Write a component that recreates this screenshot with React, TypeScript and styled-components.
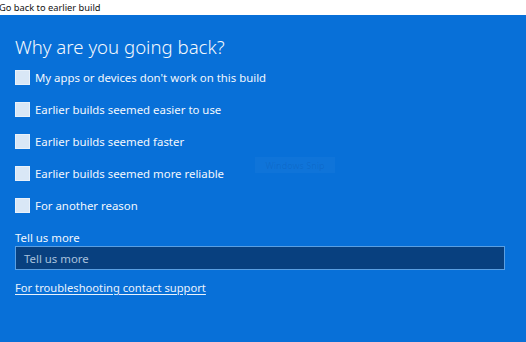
import React from "react";
import styled, { createGlobalStyle } from "styled-components";

const Global = createGlobalStyle`
  html, body { margin: 0; padding: 0; overflow: hidden; }
  body { font-family: "Noto Sans", "Open Sans", sans-serif; }
`;

const Window = styled.div`
  width: 526px;
  height: 342px;
  display: flex;
  flex-direction: column;
  overflow: hidden;
`;

const TitleBar = styled.div`
  height: 15px;
  background: #ffffff;
  display: flex;
  align-items: center;
  flex-shrink: 0;
`;

const TitleText = styled.span`
  margin-left: -1px;
  font-size: 9.3px;
  line-height: 12px;
  color: #111;
`;

const Panel = styled.div`
  position: relative;
  flex: 1;
  background: #0870d8;
  padding: 19px 21px 0 15px;
  display: flex;
  flex-direction: column;
  color: #ffffff;
`;

const Heading = styled.h1`
  margin: 0;
  font-size: 18.6px;
  line-height: 26px;
  font-weight: 300;
  color: #f4f8fd;
`;

const List = styled.div`
  margin-top: 1px;
  display: flex;
  flex-direction: column;
`;

const Row = styled.label`
  height: 32px;
  display: flex;
  align-items: center;
  gap: 5px;
`;

const Box = styled.span`
  width: 13px;
  height: 13px;
  background: #d9e7f6;
  border: 1px solid #e9f1fa;
  flex-shrink: 0;
`;

const RowText = styled.span`
  font-size: 11.4px;
  color: #f2f7fd;
`;

const FieldLabel = styled.div`
  margin-top: 9px;
  font-size: 11.4px;
  line-height: 16px;
  color: #f2f7fd;
`;

const Input = styled.div`
  height: 22px;
  background: #08407f;
  border: 1px solid #5a9fe2;
  display: flex;
  align-items: center;
  padding-left: 8px;
  font-size: 11.4px;
  color: #a9c2dd;
`;

const Link = styled.a`
  margin-top: 10px;
  font-size: 11.2px;
  line-height: 16px;
  color: #eaf2fc;
  text-decoration: underline;
  text-underline-offset: 2px;
  align-self: flex-start;
`;

const Ghost = styled.div`
  position: absolute;
  left: 255px;
  top: 142px;
  width: 80px;
  height: 16px;
  background: rgba(255, 255, 255, 0.03);
  display: flex;
  align-items: center;
  justify-content: center;
  font-size: 9px;
  color: rgba(0, 40, 100, 0.12);
`;

const reasons = [
  "My apps or devices don't work on this build",
  "Earlier builds seemed easier to use",
  "Earlier builds seemed faster",
  "Earlier builds seemed more reliable",
  "For another reason",
];

export default function App() {
  return (
    <>
      <Global />
      <Window>
        <TitleBar>
          <TitleText>Go back to earlier build</TitleText>
        </TitleBar>
        <Panel>
          <Heading>Why are you going back?</Heading>
          <List>
            {reasons.map((r) => (
              <Row key={r}>
                <Box />
                <RowText>{r}</RowText>
              </Row>
            ))}
          </List>
          <FieldLabel>Tell us more</FieldLabel>
          <Input>Tell us more</Input>
          <Link>For troubleshooting contact support</Link>
          <Ghost>Windows Snip</Ghost>
        </Panel>
      </Window>
    </>
  );
}
